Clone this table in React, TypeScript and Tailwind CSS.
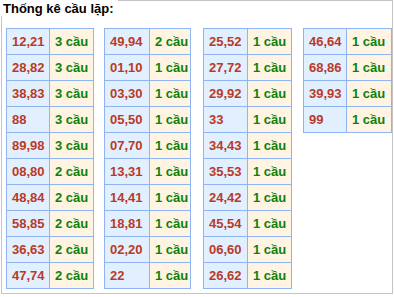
import React from 'react';

type Row = [string, number];

const tables: { rows: Row[]; ml: string; c1: string; c2: string }[] = [
  {
    ml: 'ml-[4px]',
    c1: 'w-[43px]',
    c2: 'w-[44px]',
    rows: [
      ['12,21', 3], ['28,82', 3], ['38,83', 3], ['88', 3], ['89,98', 3],
      ['08,80', 2], ['48,84', 2], ['58,85', 2], ['36,63', 2], ['47,74', 2],
    ],
  },
  {
    ml: 'ml-[10px]',
    c1: 'w-[45px]',
    c2: 'w-[41px]',
    rows: [
      ['49,94', 2], ['01,10', 1], ['03,30', 1], ['05,50', 1], ['07,70', 1],
      ['13,31', 1], ['14,41', 1], ['18,81', 1], ['02,20', 1], ['22', 1],
    ],
  },
  {
    ml: 'ml-[12px]',
    c1: 'w-[44px]',
    c2: 'w-[44px]',
    rows: [
      ['25,52', 1], ['27,72', 1], ['29,92', 1], ['33', 1], ['34,43', 1],
      ['35,53', 1], ['24,42', 1], ['45,54', 1], ['06,60', 1], ['26,62', 1],
    ],
  },
  {
    ml: 'ml-[11px]',
    c1: 'w-[43px]',
    c2: 'w-[45px]',
    rows: [['46,64', 1], ['68,86', 1], ['39,93', 1], ['99', 1]],
  },
];

const App = () => {
  return (
    <div className="bg-white px-px font-['Liberation_Sans',Arial,sans-serif] text-[13px] font-bold">
      <div className="border border-[#c4c4c4] pb-[4px]">
        <div className="-mt-px -ml-px h-[16px] w-fit bg-white pl-[2px] pr-[4px] pt-[1px] leading-[15px] text-black">
          Thống kê cầu lặp:
        </div>
        <div className="mt-[12px] flex items-start">
          {tables.map((t, i) => (
            <div key={i} className={`${t.ml} border-l border-t border-[#8fb4f4]`}>
              {t.rows.map(([pair, n]) => (
                <div key={pair} className="flex">
                  <div
                    className={`${t.c1} flex h-[26px] items-center border-b border-r border-[#8fb4f4] bg-[#e2efff] pl-[5px] text-[#b83a28]`}
                  >
                    {pair}
                  </div>
                  <div
                    className={`${t.c2} flex h-[26px] items-center border-b border-r border-[#8fb4f4] bg-[#fff4e1] pl-[5px] text-[#0a820a]`}
                  >
                    {n} cầu
                  </div>
                </div>
              ))}
            </div>
          ))}
        </div>
      </div>
    </div>
  );
};

export default App;
